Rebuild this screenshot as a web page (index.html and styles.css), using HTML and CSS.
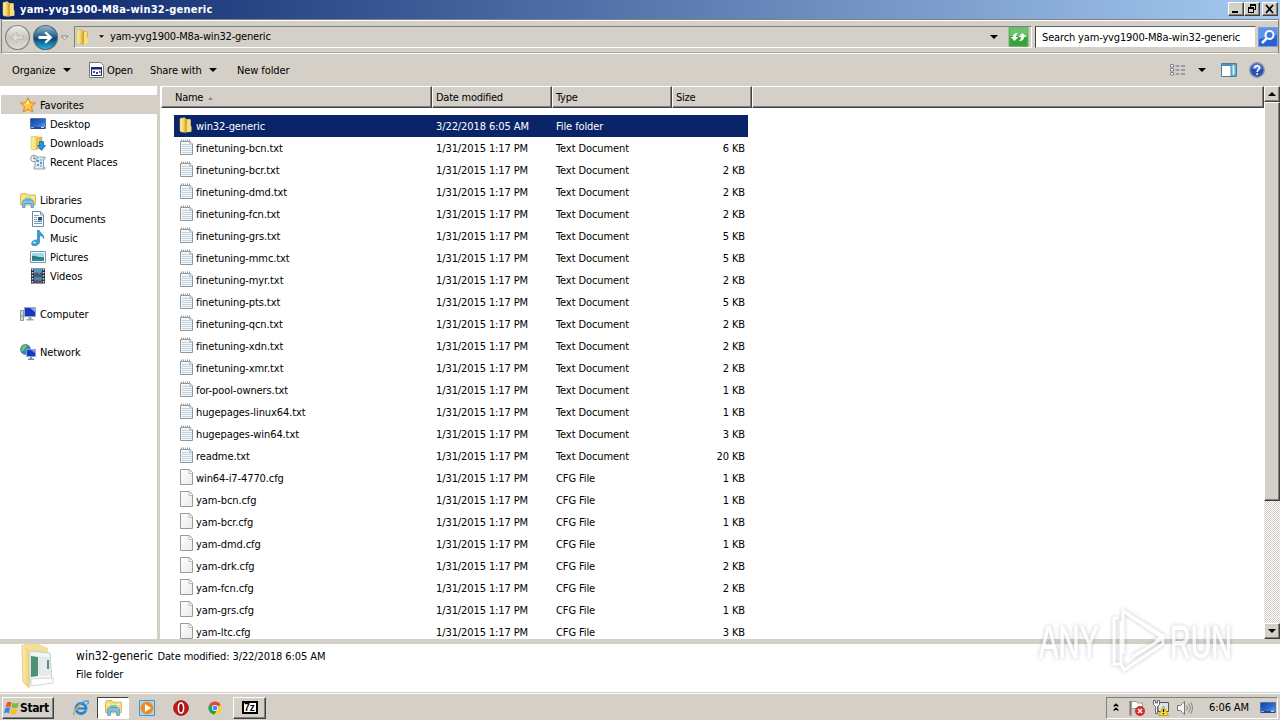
FILE: index.html
```
<!DOCTYPE html>
<html lang="en">
<head>
    <meta charset="UTF-8">
    <title>yam-yvg1900-M8a-win32-generic</title>
    <link rel="stylesheet" href="styles.css">
</head>
<body>

<!-- Shared icons -->
<svg width="0" height="0" class="defs">
    <defs>
        <linearGradient id="gold" x1="0" x2="1"><stop offset="0" stop-color="#fdf3a8"/><stop offset=".5" stop-color="#f3da72"/><stop offset="1" stop-color="#d9ab35"/></linearGradient>
        <linearGradient id="flap" x1="0" x2="1"><stop offset="0" stop-color="#fbf0b4"/><stop offset="1" stop-color="#ecd27a"/></linearGradient>
        <linearGradient id="screen" x1="0" y1="0" x2="1" y2="1"><stop offset="0" stop-color="#123fa0"/><stop offset=".6" stop-color="#2c6fd0"/><stop offset="1" stop-color="#7db8f0"/></linearGradient>
        <linearGradient id="page" x1="0" y1="0" x2="1" y2="1"><stop offset="0" stop-color="#fff"/><stop offset="1" stop-color="#e9eaec"/></linearGradient>
        <symbol id="i-folder" viewBox="0 0 16 16">
            <path d="M7 2h5l1 1v12H6z" fill="#d9b24a"/>
            <path d="M2 1.5L6.500 .5 8 2v13.500L3 15 2 14z" fill="url(#gold)" stroke="#d8b250" stroke-width=".5"/>
            <path d="M9 3l3-.5v6l1.500 1v5L8.500 15.500z" fill="#f5df80"/>
            <path d="M8.200 3v12" stroke="#b98c26" stroke-width=".6"/>
        </symbol>
        <symbol id="i-txt" viewBox="0 0 16 16">
            <path d="M.5 2.500h10l2 2v11h-12z" fill="#f4f8fb" stroke="#8d979e"/>
            <path d="M2 5.500h9M2 7.500h10M2 9.500h10M2 11.500h10M2 13.500h10" stroke="#c3d3df"/>
            <path d="M1 1.500h9" stroke="#9a9fa3" stroke-width="2" stroke-dasharray="1 1"/>
            <path d="M10 2v3h3" fill="#fff" stroke="#8d979e" stroke-width=".8"/>
        </symbol>
        <symbol id="i-cfg" viewBox="0 0 16 16">
            <path d="M.5 .500h9l3 3v12h-12z" fill="url(#page)" stroke="#9a9a9a"/>
            <path d="M9 1v3.500h3.500" fill="#fff" stroke="#aaa" stroke-width=".8"/>
        </symbol>
        <symbol id="i-star" viewBox="0 0 16 16">
            <path d="M8 .7l2.200 4.900 5.300.5-4 3.500 1.200 5.300L8 12.200l-4.700 2.700 1.200-5.300-4-3.500 5.300-.5z" fill="#ffc93c" stroke="#e2801a" stroke-width="1"/>
            <path d="M8 3l1.300 3.600L5 8z" fill="#fff2a8"/>
        </symbol>
        <symbol id="i-desktop" viewBox="0 0 16 16">
            <path d="M.5 2.500h15v10H.5z" fill="url(#screen)" stroke="#5575a8"/>
            <path d="M1 11h14v2H1z" fill="#27478c"/><path d="M1 11.500h3" stroke="#65c4ee"/><path d="M11 11.500h3" stroke="#c3ddf6"/>
        </symbol>
        <symbol id="i-down" viewBox="0 0 16 16">
            <path d="M1 2L6 1l1 1v12.500L2 15l-1-1zM7 2h5v12H7z" fill="url(#gold)" stroke="#cfa43c" stroke-width=".5"/>
            <path d="M9.500 6.500h4v4h2l-4 5-4-5h2z" fill="#2792df" stroke="#1468ad" stroke-width=".8"/>
        </symbol>
        <symbol id="i-recent" viewBox="0 0 16 16">
            <path d="M5 3h10v2h-1.500v8.500H15V15H4v-2h1z" fill="#dcebf5" stroke="#748da3" stroke-width=".8"/>
            <path d="M7 6h2v2H7zM10 8h2v2h-2zM7 10h2v2H7z" fill="#5e94c6"/><path d="M10 6h2M10 12h2" stroke="#738799"/>
            <circle cx="4" cy="4.500" r="3.300" fill="#f5f8fa" stroke="#8794a0"/><path d="M4 2.500v2.300h2" fill="none" stroke="#567"/>
        </symbol>
        <symbol id="i-lib" viewBox="0 0 16 16">
            <path d="M.5 3l1-1.500h5L8 3h7.500v10H.5z" fill="#f5dd7c" stroke="#cda53a" stroke-width=".7"/>
            <path d="M5 4.500h6v4H5z" fill="#8ac78f"/><path d="M1 5h14" stroke="#fff4b5"/>
            <path d="M2.500 15.500v-6l1.500-1.500h8l1.500 1.500v6H11v-4H5v4z" fill="#7cc4ee" stroke="#4189be" stroke-width=".7"/>
        </symbol>
        <symbol id="i-doc" viewBox="0 0 16 16">
            <path d="M2.500 .500h8l3 3v12h-11z" fill="#fff" stroke="#6f879c"/><path d="M10.500 1v3h3" fill="#dbe6ef" stroke="#6f879c" stroke-width=".8"/>
            <path d="M4 4.500h5M4 6.500h3M4 8.500h3M4 10.500h8M4 12.500h8" stroke="#7b9cb8"/><path d="M8 6h4v3.500H8z" fill="#244e87"/>
        </symbol>
        <symbol id="i-music" viewBox="0 0 16 16">
            <path d="M7.500 0h1.500c.5 3 5.500 4 4.700 8.500C13 6.500 11.500 5.500 9.500 5.500v6.300c0 2.200-2.500 4-5 4S1 14 2 12.200c.9-1.900 3.500-2.700 5.500-2z" fill="#35a2dc" stroke="#1a6ba5" stroke-width=".6"/>
            <ellipse cx="4.500" cy="12.500" rx="1.700" ry="1" fill="#a5e3fa"/>
        </symbol>
        <symbol id="i-pic" viewBox="0 0 16 16">
            <path d="M.5 2.500h15v11H.5z" fill="#fff" stroke="#7795ac"/><path d="M2 4h12v8H2z" fill="#9fdaf5"/>
            <path d="M2 7c4-1 6 2 12 1v2H2z" fill="#2c8068"/><path d="M2 10h12v2H2z" fill="#2986b6"/>
        </symbol>
        <symbol id="i-video" viewBox="0 0 16 16">
            <path d="M1 .500h14v15H1z" fill="#222d38"/><path d="M4 1h8v6.500H4z" fill="#4b9ccc"/><path d="M4 8.500h8V15H4z" fill="#3d88be"/>
            <path d="M4 6l3-2 2 2 3-2v3.500H4zM4 13l3-1 3 1 2-1v3H4z" fill="#6a4a58"/>
            <path d="M2.500 1v14M13.500 1v14" stroke="#dce6ec" stroke-width="1.500" stroke-dasharray="1.500 1.500"/>
        </symbol>
        <symbol id="i-comp" viewBox="0 0 16 16">
            <path d="M.5 4.500h3v10h-3z" fill="#cfd5d8" stroke="#7b8386" stroke-width=".8"/><path d="M1 10h2" stroke="#48b050"/>
            <path d="M4.500 1.500h11v9h-11z" fill="#1a35bf" stroke="#9aa7b8"/><path d="M10 2h5v4z" fill="#8aa5ed"/>
            <path d="M8.500 11h3v2h2v1.500h-7V13h2z" fill="#97a5b4"/>
        </symbol>
        <symbol id="i-net" viewBox="0 0 16 16">
            <circle cx="5.500" cy="5.500" r="5" fill="#2c87ca" stroke="#2c6799" stroke-width=".6"/>
            <path d="M2 3c2-3 5-2 5-1L5 5 2 8C.5 6 1 4 2 3z" fill="#72c554"/>
            <path d="M6.500 5.500h9v7h-9z" fill="#1838c4" stroke="#91a5bf"/><path d="M11 6h4v3z" fill="#7c9ded"/>
            <path d="M10 13h2v1.500h2V16H8v-1.500h2z" fill="#7d8da0"/>
        </symbol>
        <symbol id="i-tri" viewBox="0 0 8 4"><path d="M0 0h8L4 4z"/></symbol>
    </defs>
</svg>

<div class="window">
    <header class="titlebar">
        <svg class="icon"><use href="#i-folder"/></svg>
        <h1>yam-yvg1900-M8a-win32-generic</h1>
        <div class="win-buttons">
            <button class="raised"><svg viewBox="0 0 12 10"><path d="M2 7h6v2H2z"/></svg></button>
            <button class="raised"><svg viewBox="0 0 12 10"><path d="M4 0h6v6H8V5h1V2H5v1H4zM2 3h6v6H2zM3 5v3h4V5z" fill-rule="evenodd"/></svg></button>
            <button class="raised close"><svg viewBox="0 0 12 10"><path d="M2 1l7 8M9 1L2 9" stroke="#000" stroke-width="1.700"/></svg></button>
        </div>
    </header>

    <div class="navbar">
        <svg class="nav-buttons" viewBox="0 0 68 28">
            <defs>
                <linearGradient id="back" x2="0" y2="1"><stop offset="0" stop-color="#f0efec"/><stop offset=".5" stop-color="#c9c6c0"/><stop offset="1" stop-color="#e0ddd7"/></linearGradient>
                <linearGradient id="fwd" x2="0" y2="1"><stop offset="0" stop-color="#9ab9cd"/><stop offset=".45" stop-color="#27658f"/><stop offset=".55" stop-color="#0b4778"/><stop offset="1" stop-color="#28b7e4"/></linearGradient>
            </defs>
            <circle cx="14.500" cy="14.500" r="12" fill="url(#back)" stroke="#888680" stroke-width="1.200"/>
            <path d="M8.500 14.500l5.500-5V13h6.500v3H14v3.500z" fill="#e2dfda" stroke="#b0ada6" stroke-width=".8"/>
            <circle cx="42.500" cy="14.500" r="12" fill="url(#fwd)" stroke="#4f7182" stroke-width="1.200"/>
            <path d="M49.500 14.500l-6.500-6L41.500 10l3 3H35.500v3h9l-3 3 1.500 1.500z" fill="#fff"/>
            <path d="M58 13h7l-3.500 3.500z" fill="#eee" stroke="#888"/>
        </svg>
        <div class="address">
            <svg class="icon"><use href="#i-folder"/></svg>
            <svg class="tri small"><use href="#i-tri"/></svg>
            <span class="path">yam-yvg1900-M8a-win32-generic</span>
            <svg class="tri"><use href="#i-tri"/></svg>
            <svg class="refresh" viewBox="0 0 20 20">
                <path d="M.5 .5h19v19H.5z" fill="#35a53b" stroke="#7bac77"/><path d="M1 1h18v8H1z" fill="#69c568"/>
                <path d="M2 10l4 4 4-4H7.500c0-2 .8-3 2-4C6 6 4.500 7.500 4.500 10zM18 10l-4-4-4 4h2.500c0 2-.8 3-2 4 3.500 0 5-1.500 5-4z" fill="#fff"/>
            </svg>
        </div>
        <div class="search">Search yam-yvg1900-M8a-win32-generic</div>
        <svg class="search-btn" viewBox="0 0 20 20">
            <path d="M.5 .5h19v19H.5z" fill="#2863d4" stroke="#7a9cd9"/><path d="M1 1h18v7L1 12z" fill="#5d94ea"/>
            <circle cx="11.500" cy="8" r="4" fill="#3b78dc" stroke="#fff" stroke-width="2"/><path d="M8.500 11.500L4 16" stroke="#fff" stroke-width="2.500"/>
        </svg>
    </div>

    <div class="toolbar">
        <span class="tool organize">Organize <svg class="tri"><use href="#i-tri"/></svg></span>
        <span class="tool open">
            <svg class="icon" viewBox="0 0 16 16"><path d="M.5 .5h11l3 3v12H.5z" fill="#fff" stroke="#777"/><path d="M2.500 5.500h10v8h-10z" fill="#fff" stroke="#152a70"/><path d="M2 5h11v2.500H2z" fill="#152a70"/><path d="M4 9h2v2H4zM7 10h2v2H7z" fill="#2a4fa8"/><path d="M10 9h1.500v2H10z" fill="#c33"/></svg>
            Open</span>
        <span class="tool share">Share with <svg class="tri"><use href="#i-tri"/></svg></span>
        <span class="tool newf">New folder</span>
        <svg class="view" viewBox="0 0 16 12"><path d="M.5 .5h3v2.500h-3zM.5 4.500h3V7h-3zM.5 8.500h3V11h-3z" fill="#fff" stroke="#777" stroke-width=".9"/><path d="M5.500 2h4M11 2h4M5.500 6h4M11 6h4M5.500 10h4M11 10h4" stroke="#596d8a"/></svg>
        <svg class="tri view-tri"><use href="#i-tri"/></svg>
        <svg class="icon" viewBox="0 0 16 16"><path d="M.5 1.500h15v13H.5z" fill="#fff" stroke="#477ea3"/><path d="M1 2h9v2H1z" fill="#4a91bc"/><path d="M10 2h5v12h-5z" fill="#8fcbe6" stroke="#477ea3"/><path d="M12.500 4v8" stroke="#d9f2fc"/></svg>
        <svg class="icon help" viewBox="0 0 16 16"><circle cx="8" cy="8" r="7.200" fill="#2a50b5" stroke="#8493b0" stroke-width="1.400"/><path d="M3 7a5 5 0 0 1 10 0z" fill="#5d83d8"/><path d="M5.700 6.200c0-3.200 4.800-3 4.800-.3C10.500 7.800 8.200 7.500 8.200 10" fill="none" stroke="#fff" stroke-width="1.700"/><circle cx="8.200" cy="12" r="1" fill="#fff"/></svg>
    </div>

    <div class="main">
        <nav class="sidebar">
            <ul>
                <li class="root current"><svg class="icon"><use href="#i-star"/></svg><span>Favorites</span></li>
                <li><svg class="icon"><use href="#i-desktop"/></svg><span>Desktop</span></li>
                <li><svg class="icon"><use href="#i-down"/></svg><span>Downloads</span></li>
                <li><svg class="icon"><use href="#i-recent"/></svg><span>Recent Places</span></li>
            </ul>
            <ul>
                <li class="root"><svg class="icon"><use href="#i-lib"/></svg><span>Libraries</span></li>
                <li><svg class="icon"><use href="#i-doc"/></svg><span>Documents</span></li>
                <li><svg class="icon"><use href="#i-music"/></svg><span>Music</span></li>
                <li><svg class="icon"><use href="#i-pic"/></svg><span>Pictures</span></li>
                <li><svg class="icon"><use href="#i-video"/></svg><span>Videos</span></li>
            </ul>
            <ul>
                <li class="root"><svg class="icon"><use href="#i-comp"/></svg><span>Computer</span></li>
            </ul>
            <ul>
                <li class="root"><svg class="icon"><use href="#i-net"/></svg><span>Network</span></li>
            </ul>
        </nav>
        <section class="files">
            <div class="columns">
                <div class="col name">Name <svg class="sort" viewBox="0 0 6 3"><path d="M0 3h6L3 0z"/></svg></div>
                <div class="col">Date modified</div>
                <div class="col">Type</div>
                <div class="col">Size</div>
                <div class="col"></div>
            </div>
            <div class="rows" id="rows"></div>
        </section>
        <div class="scrollbar">
            <div class="raised arrow"><svg class="tri up"><use href="#i-tri"/></svg></div>
            <div class="raised thumb"></div>
            <div class="track"></div>
            <div class="raised arrow"><svg class="tri"><use href="#i-tri"/></svg></div>
        </div>
    </div>

    <footer class="details">
        <svg class="big-folder" viewBox="0 0 36 46">
            <path d="M3 1h16l9 4v6L8 8z" fill="#f1e09a"/>
            <path d="M10 8l20 2 2 28-22 4z" fill="#f3f5f5" stroke="#c9cfcf"/>
            <path d="M11 13l7 1v19l-7 1z" fill="#4f8f73"/><path d="M19 14l11 1v16l-11 1z" fill="#e6ecee" stroke="#ccd4d6" stroke-width=".5"/><path d="M27 17h2v9h-2z" fill="#5d8f8a"/>
            <path d="M11 36l22-1v5l-22 3z" fill="#fff" stroke="#d4d8d8"/>
            <path d="M2 2l7 7v36l-6-6z" fill="url(#flap)" stroke="#e6cc78"/>
        </svg>
        <div>
            <div><span class="fname">win32-generic</span> <span class="mod">Date modified: 3/22/2018 6:05 AM</span></div>
            <div class="kind">File folder</div>
        </div>
    </footer>
</div>

<div class="taskbar">
    <button class="start raised">
        <svg viewBox="0 0 16 16"><path d="M3 2.500c2-1.500 3.500-1.500 5-.5L6.800 7.200C5.300 6.200 3.300 6.200 1.500 7.500z" fill="#e8562a"/><path d="M9 2.500c2 1 4 1 7-.3l-1.500 5.300c-2 1-4.500 1-6.700 0z" fill="#7dbb3c"/><path d="M1.200 8.500c2-1.500 3.800-1.500 5.300-.5l-1.300 5.500c-1.500-1-3.500-1-5.200.3z" fill="#3b86d8"/><path d="M7.500 8.700c2 1 4.300 1 6.700 0L12.800 14c-2 1-4.500 1-6.700 0z" fill="#f7bd24"/></svg>
        Start
    </button>
    <div class="task ie"><svg class="icon" viewBox="0 0 16 16"><circle cx="8" cy="8.500" r="5" fill="none" stroke="#2684d0" stroke-width="3"/><path d="M5 8.500h8" stroke="#2684d0" stroke-width="2.200"/><path d="M9.500 10.500H16v-1z" fill="#d4d0c8"/><path d="M1.500 15C-1 12 8 .5 14.500 1c1.500.2 1 2 0 3.500" fill="none" stroke="#4aa0dc" stroke-width="1.500"/><path d="M1.500 15C0 13 3 8 7.500 4.500" fill="none" stroke="#e5b530" stroke-width="1.200"/></svg></div>
    <div class="task active"><svg viewBox="0 0 16 16"><use href="#i-lib"/></svg></div>
    <div class="task"><svg class="icon" viewBox="0 0 16 16"><path d="M.5 .5h15v15H.5z" fill="#a9d5f0" stroke="#4d92c5"/><circle cx="8" cy="8" r="6.300" fill="#f08a1c"/><path d="M6 4l6 4-6 4z" fill="#fff"/></svg></div>
    <div class="task"><svg class="icon" viewBox="0 0 16 16"><circle cx="8" cy="8" r="7.500" fill="#c4171c" stroke="#8c1014" stroke-width=".6"/><ellipse cx="8" cy="8" rx="2.600" ry="5" fill="#981014" stroke="#fff" stroke-width="1.500"/></svg></div>
    <div class="task"><svg class="icon chrome" viewBox="0 0 16 16"><circle cx="8" cy="8" r="7.500" fill="#ffcd40"/><path d="M8 8L1.500 4.200a7.500 7.500 0 0 1 13 .1z" fill="#dd4b3e"/><path d="M8 8L1.500 4.200A7.500 7.500 0 0 0 7.500 15.500l3-6z" fill="#23a05c"/><circle cx="8" cy="8" r="3.500" fill="#fff"/><circle cx="8" cy="8" r="2.700" fill="#4585ee"/></svg></div>
    <div class="task raised seven"><span>7z</span></div>
    <div class="tray">
        <svg class="chev" viewBox="0 0 6 9"><path d="M.7 3.500L3 1.200l2.300 2.300M.7 7.500L3 5.200l2.300 2.300" fill="none" stroke="#000" stroke-width="1.300"/></svg>
        <svg class="icon flag" viewBox="0 0 16 16"><path d="M1.500 1v14.500" stroke="#777" stroke-width="2"/><path d="M2.500 1.500h5l1 1.500h5v7h-5l-1-1.500h-5z" fill="#fff" stroke="#888" stroke-width=".8"/><circle cx="11" cy="11" r="4.700" fill="#dc2727" stroke="#a31313" stroke-width=".5"/><path d="M9 9l4 4M13 9l-4 4" stroke="#fff" stroke-width="1.500"/></svg>
        <svg class="icon lan" viewBox="0 0 16 16"><path d="M5 2.500h10.500v9H5z" fill="#d8e2e7" stroke="#555"/><path d="M.5 .5v4l2 2v7h2v-7l2-2v-4h-2v2.500h-2V.5z" fill="#fff" stroke="#555" stroke-width=".9"/><path d="M10.500 6l5 9.500h-10z" fill="#ffd82a" stroke="#a98800" stroke-width=".6"/><path d="M10.500 9v3M10.500 13v1.300" stroke="#111" stroke-width="1.300"/></svg>
        <svg class="icon vol" viewBox="0 0 16 16"><path d="M.5 5.500h3l4-4v13l-4-4h-3z" fill="#f7f7f7" stroke="#777"/><path d="M9.500 5.500q2 2.500 0 5M11.500 3.500q3.500 4.500 0 9M13.500 2q4 6 0 12" fill="none" stroke="#888"/></svg>
        <span class="clock">6:06 AM</span>
        <svg class="icon"><use href="#i-desktop"/></svg>
    </div>
</div>

<!-- Watermark -->
<svg class="watermark" viewBox="0 0 240 76">
    <text x="1" y="54" textLength="60" lengthAdjust="spacingAndGlyphs">ANY</text>
    <text x="132" y="54" textLength="62" lengthAdjust="spacingAndGlyphs">RUN</text>
    <path d="M85 50V7l40 25-8 5"/>
    <path d="M85 7l40 27-31 19"/>
    <path d="M80 14h-4v46h7V17"/>
    <path d="M83 60l3 6 39-26v-6"/>
</svg>

<script src="script.js"></script>
</body>
</html>
```
FILE: styles.css
```
* {
    box-sizing: border-box;
}

body {
    margin: 0;
    width: 1280px;
    height: 720px;
    overflow: hidden;
    background: #d4d0c8;
    color: #000;
    font-family: "DejaVu Sans Condensed", "DejaVu Sans", sans-serif;
    font-stretch: condensed;
    font-size: 11px;
    letter-spacing: -0.1px;
    white-space: nowrap;
}

.defs {
    position: absolute;
}

svg {
    display: block;
    flex: none;
}

.icon {
    width: 16px;
    height: 16px;
}

.tri {
    width: 8px;
    height: 4px;
}

.raised {
    background: #d4d0c8;
    border: 1px solid;
    border-color: #fff #404040 #404040 #fff;
    box-shadow: inset -1px -1px #808080;
    padding: 0;
}

.window {
    display: flex;
    flex-direction: column;
    height: 693px;
}

/* Title bar */
.titlebar {
    display: flex;
    align-items: center;
    height: 19px;
    padding: 0 2px 1px 1px;
    background: linear-gradient(to right, #0a246a, #a6caf0);
    flex: none;
}

.titlebar h1 {
    flex: 1;
    margin: 0 0 0 3px;
    color: #fff;
    font-size: 11px;
    letter-spacing: 0.23px;
}

.win-buttons {
    display: flex;
}

.win-buttons button {
    width: 16px;
    height: 14px;
}

.win-buttons .close {
    margin-left: 2px;
}

.win-buttons svg {
    width: 12px;
    height: 10px;
    margin-left: 1px;
}

/* Address bar */
.navbar {
    display: flex;
    align-items: center;
    height: 35px;
    margin: 0 1px;
    border: 1px solid #808080;
    border-bottom-color: #fff;
    box-shadow: inset 0 1px #fff, inset 0 -1px #aaa69e;
    flex: none;
}

.nav-buttons {
    width: 68px;
    height: 28px;
    margin-left: 1px;
}

.address {
    display: flex;
    align-items: center;
    width: 958px;
    height: 22px;
    margin-left: 3px;
    padding: 0 2px 0 0;
    border: 1px solid;
    border-color: #808080 #fff #fff #808080;
}

.tri.small {
    width: 5px;
    height: 3px;
    margin: 0 6px 0 8px;
}

.address .path {
    flex: 1;
    letter-spacing: -0.2px;
}

.refresh {
    width: 21px;
    height: 20px;
    margin-left: 10px;
}

.search {
    width: 221px;
    height: 22px;
    margin-left: 3px;
    padding-left: 6px;
    line-height: 21px;
    letter-spacing: -0.15px;
    background: #fff;
    border: 1px solid;
    border-color: #606060 #d4d0c8 #d4d0c8 #404040;
}

.search-btn {
    width: 20px;
    height: 20px;
    margin-left: 2px;
}

/* Toolbar */
.toolbar {
    display: flex;
    align-items: center;
    height: 32px;
    padding: 0 15px 0 12px;
    flex: none;
}

.tool {
    display: flex;
    align-items: center;
}

.organize {
    width: 77px;
}

.organize .tri {
    margin-left: auto;
    margin-right: 18px;
}

.open {
    width: 61px;
}

.open .icon {
    margin-right: 2px;
}

.share {
    width: 87px;
}

.share .tri {
    margin-left: auto;
    margin-right: 20px;
}

.newf {
    flex: 1;
}

.view {
    width: 16px;
    height: 12px;
}

.view-tri {
    margin: 0 15px 0 12px;
}

.help {
    margin-left: 12px;
}

/* Main area */
.main {
    display: flex;
    height: 553px;
    background: #fff;
    flex: none;
}

.sidebar {
    width: 160px;
    padding: 9px 0 0 1px;
    border-right: 3px solid #d4d0c8;
    flex: none;
}

.sidebar ul {
    margin: 0 0 19px;
    padding: 0;
    list-style: none;
}

.sidebar li {
    display: flex;
    align-items: center;
    gap: 4px;
    height: 19px;
    padding-left: 29px;
}

.sidebar li.root {
    padding-left: 19px;
}

.sidebar li span {
    padding-top: 2px;
}

.sidebar .current {
    background: #d4d0c8;
}

.files {
    width: 1104px;
    overflow: hidden;
}

.columns {
    display: grid;
    grid-template-columns: 271px 120px 120px 80px 1fr;
    height: 22px;
    margin-left: 1px;
}

.col {
    padding: 2px 0 0 3px;
    line-height: 18px;
    letter-spacing: -0.25px;
    background: #d4d0c8;
    border: 1px solid;
    border-color: #fff #404040 #404040 #fff;
    box-shadow: inset -1px -1px #808080;
}

.col.name {
    display: flex;
    align-items: center;
    gap: 5px;
    padding-left: 13px;
}

.sort {
    width: 5px;
    height: 3px;
    fill: #808080;
}

.rows {
    padding: 7px 0 0 14px;
}

.row {
    display: grid;
    grid-template-columns: 22px 240px 120px 1fr 60px;
    align-items: center;
    width: 574px;
    height: 22px;
    padding-right: 3px;
}

.row .icon {
    margin: -2px 0 0 6px;
}

.row.selected .icon {
    margin-left: 4px;
}

.row .size {
    text-align: right;
}

.row.selected {
    background: #0a246a;
    color: #fff;
}

/* Scroll bar */
.scrollbar {
    display: flex;
    flex-direction: column;
    width: 16px;
}

.arrow {
    display: flex;
    align-items: center;
    justify-content: center;
    height: 16px;
}

.arrow .up {
    transform: rotate(180deg);
}

.thumb {
    height: 399px;
}

.track {
    flex: 1;
    background: repeating-conic-gradient(#d4d0c8 0 25%, #fff 0 50%) 0 0 / 2px 2px;
}

/* Details pane */
.details {
    display: flex;
    height: 54px;
    padding-left: 20px;
    background: #fff;
    border-top: 5px solid #d4d0c8;
    border-bottom: 1px solid #d4d0c8;
}

.big-folder {
    width: 36px;
    height: 46px;
    margin: -1px 20px 0 0;
}

.details .fname {
    font-size: 12px;
    letter-spacing: 0.05px;
}

.details .mod {
    margin-left: 1px;
    letter-spacing: -0.1px;
}

.details > div > div {
    height: 18px;
    line-height: 24px;
}

.details .kind {
    line-height: 25px;
}

/* Taskbar */
.taskbar {
    display: flex;
    align-items: center;
    height: 27px;
    padding: 1px 2px 0;
    border-top: 1px solid #fff;
}

.start {
    display: flex;
    align-items: center;
    width: 52px;
    height: 22px;
    padding-left: 1px;
    font: bold 12px "DejaVu Sans Condensed", sans-serif;
    letter-spacing: -0.4px;
    margin-right: 10px;
}

.start svg {
    width: 15px;
    height: 16px;
    margin-right: 1px;
}

.task {
    display: flex;
    align-items: center;
    justify-content: center;
    width: 34px;
    height: 22px;
}

.task.ie {
    width: 33px;
}

.task.active {
    background: #fff;
    border: 1px solid;
    border-color: #404040 #fff #fff #404040;
    width: 32px;
    margin-right: 1px;
}

.task.active svg {
    width: 17px;
    height: 17px;
}

.chrome {
    width: 14px;
    height: 14px;
}

.seven {
    width: 33px;
    margin-left: 1px;
}

.seven span {
    width: 16px;
    height: 13px;
    border: 2px solid #000;
    background: #fff;
    font: bold 10px/9px "Liberation Sans", sans-serif;
    text-align: center;
}

.tray {
    display: flex;
    align-items: center;
    width: 172px;
    height: 22px;
    margin-left: auto;
    padding-left: 6px;
    border: 1px solid;
    border-color: #808080 #fff #fff #808080;
}

.chev {
    width: 6px;
    height: 9px;
    margin-right: 10px;
}

.flag,
.lan {
    margin-right: 8px;
}

.clock {
    margin: 0 11px 0 16px;
}

/* Watermark */
.watermark {
    position: absolute;
    left: 1038px;
    top: 604px;
    width: 240px;
    height: 76px;
    filter: drop-shadow(0 0 2px rgba(0, 0, 0, 0.3));
    opacity: 0.75;
    pointer-events: none;
}

.watermark text {
    font: 46px "Liberation Sans", sans-serif;
    letter-spacing: 0;
    fill: #fff;
    stroke: #fff;
}

.watermark path {
    fill: none;
    stroke: #fff;
    stroke-width: 3;
}
```
FILE: script.js
```
// name, size in KB
const files = [
    ['finetuning-bcn.txt', 6],
    ['finetuning-bcr.txt', 2],
    ['finetuning-dmd.txt', 2],
    ['finetuning-fcn.txt', 2],
    ['finetuning-grs.txt', 5],
    ['finetuning-mmc.txt', 5],
    ['finetuning-myr.txt', 2],
    ['finetuning-pts.txt', 5],
    ['finetuning-qcn.txt', 2],
    ['finetuning-xdn.txt', 2],
    ['finetuning-xmr.txt', 2],
    ['for-pool-owners.txt', 1],
    ['hugepages-linux64.txt', 1],
    ['hugepages-win64.txt', 3],
    ['readme.txt', 20],
    ['win64-i7-4770.cfg', 1],
    ['yam-bcn.cfg', 1],
    ['yam-bcr.cfg', 1],
    ['yam-dmd.cfg', 1],
    ['yam-drk.cfg', 2],
    ['yam-fcn.cfg', 2],
    ['yam-grs.cfg', 1],
    ['yam-ltc.cfg', 3]
];

function row(icon, name, date, type, size, cls) {
    return `<div class="row ${cls}">
        <svg class="icon"><use href="#i-${icon}"/></svg>
        <span class="file">${name}</span><span class="date">${date}</span><span class="type">${type}</span><span class="size">${size}</span>
    </div>`;
}

let html = row('folder', 'win32-generic', '3/22/2018 6:05 AM', 'File folder', '', 'selected');
files.forEach(([name, kb]) => {
    const ext = name.split('.').pop();
    html += row(ext, name, '1/31/2015 1:17 PM', ext === 'txt' ? 'Text Document' : 'CFG File', kb + ' KB', '');
});
document.getElementById('rows').innerHTML = html;
```
